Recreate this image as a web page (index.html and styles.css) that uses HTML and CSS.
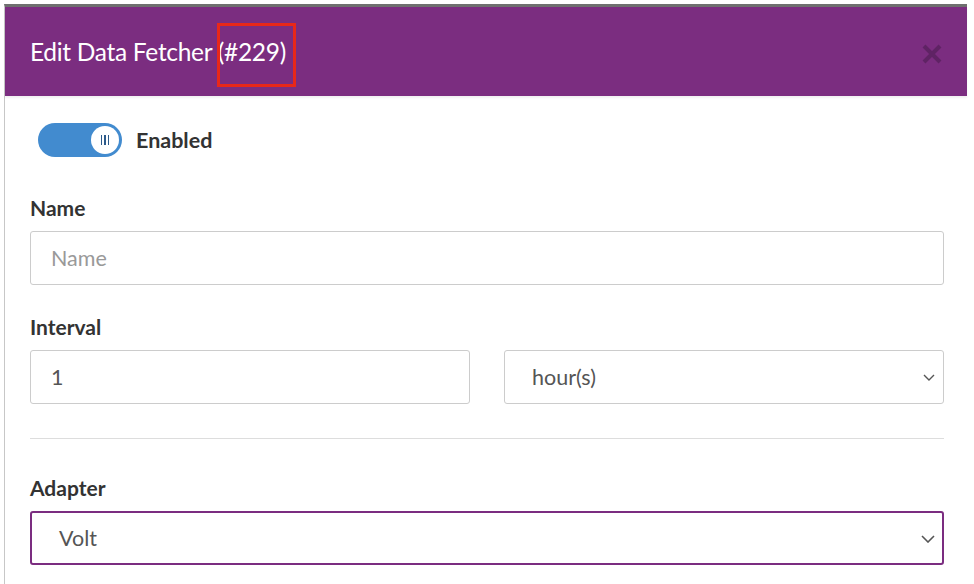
FILE: index.html
```html
<!DOCTYPE html>
<html>
<head>
<meta charset="utf-8">
<link rel="stylesheet" href="styles.css">
</head>
<body>
<div class="page">
  <div class="modal">
    <div class="modal-header">
      <h1 class="title">Edit Data Fetcher <span class="id">(#229)</span></h1>
      <span class="close" aria-label="close">
        <svg width="22" height="22" viewBox="0 0 22 22"><path d="M3 3 L19 19 M19 3 L3 19" stroke="#5f2364" stroke-width="4" stroke-linecap="butt"/></svg>
      </span>
      <div class="highlight"></div>
    </div>
    <div class="modal-body">
      <div class="toggle-row">
        <span class="toggle"><span class="knob"><i></i><i></i><i></i></span></span>
        <span class="toggle-label">Enabled</span>
      </div>
      <div class="field">
        <label class="label">Name</label>
        <div class="input placeholder">Name</div>
      </div>
      <div class="field">
        <label class="label">Interval</label>
        <div class="row">
          <div class="input">1</div>
          <div class="input select">hour(s)
            <svg class="chev" width="12" height="8" viewBox="0 0 12 8"><path d="M1 1 L6 6 L11 1" fill="none" stroke="#555" stroke-width="1.4"/></svg>
          </div>
        </div>
      </div>
      <hr class="divider">
      <div class="field">
        <label class="label">Adapter</label>
        <div class="input select active">Volt
          <svg class="chev" width="14" height="8" viewBox="0 0 14 8"><path d="M1 1 L7 7 L13 1" fill="none" stroke="#555" stroke-width="1.6"/></svg>
        </div>
      </div>
    </div>
  </div>
</div>
</body>
</html>
```
FILE: styles.css
```css
* { box-sizing: border-box; }
html, body { margin: 0; padding: 0; background: #fff; }
body { font-family: "Lato", "Open Sans", sans-serif; color: #333; overflow: hidden; height: 584px; }
.page { padding: 4px 7px 0 4px; }
.modal {
  border-top: 3px solid #6f6f6f;
  border-left: 1px solid #c7c7c7;
  height: 580px;
}
.modal-header {
  position: relative;
  background: #7b2d80;
  height: 89px;
  display: flex;
  align-items: center;
  justify-content: space-between;
  padding: 0 24px 0 25px;
  box-shadow: 0 2px 2px rgba(0,0,0,0.06);
}
.title {
  margin: 0;
  font-weight: 400;
  font-size: 24.5px;
  color: #fff;
  letter-spacing: -0.3px;
}
.close { display: flex; margin-top: 4px; }
.highlight {
  position: absolute;
  left: 212px; top: 16px;
  width: 79px; height: 64px;
  border: 3px solid #e8281a;
}
.modal-body { padding: 27px 23px 0 25px; }
.toggle-row { display: flex; align-items: center; gap: 14px; padding-left: 8px; height: 34px; }
.toggle {
  width: 84px; height: 34px;
  background: #428bcf;
  border-radius: 17px;
  display: flex; align-items: center; justify-content: flex-end;
  padding-right: 3px;
}
.knob {
  width: 28px; height: 28px; border-radius: 50%;
  background: #fff;
  display: flex; align-items: center; justify-content: center; gap: 2px;
}
.knob i { display: block; width: 1.5px; height: 10px; background: #2d5a8a; }
.toggle-label { font-weight: 700; font-size: 21.5px; color: #333; }
.field { display: flex; flex-direction: column; }
.label { font-weight: 700; font-size: 21px; color: #333; margin: 0 0 11px; line-height: 24px; }
.toggle-row + .field { margin-top: 39px; }
.field + .field { margin-top: 30px; }
.input {
  height: 54px;
  border: 1px solid #ccc;
  border-radius: 3px;
  display: flex; align-items: center;
  padding: 0 20px;
  font-size: 21.5px;
  color: #555;
  position: relative;
  min-width: 0;
}
.placeholder { color: #999; }
.row { display: grid; grid-template-columns: 1fr 1fr; column-gap: 34px; }
.select { padding-left: 27px; }
.select .chev { position: absolute; right: 8px; top: 23px; }
.active { border-color: #7b2d80; border-width: 2px; }
.active .chev { right: 7px; top: 22px; }
.divider { border: 0; border-top: 1px solid #ddd; margin: 34px 0 37px; }
```
